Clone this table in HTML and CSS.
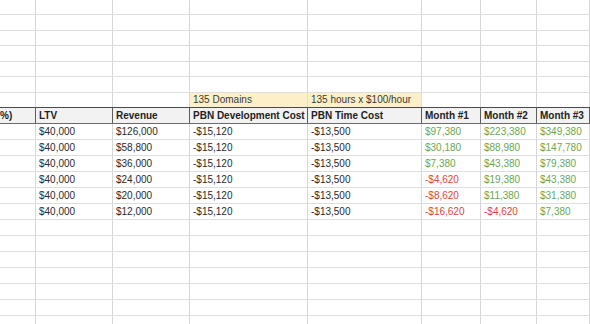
FILE: index.html
```html
<!DOCTYPE html>
<html>
<head>
<meta charset="utf-8">
<link rel="stylesheet" href="styles.css">
</head>
<body>
<div class="sheet">
  <div class="row r-top"><div class="c"></div><div class="c"></div><div class="c"></div><div class="c"></div><div class="c"></div><div class="c"></div><div class="c"></div><div class="c"></div></div>
  <div class="row r-mid"><div class="c"></div><div class="c"></div><div class="c"></div><div class="c"></div><div class="c"></div><div class="c"></div><div class="c"></div><div class="c"></div></div>
  <div class="row r-mid"><div class="c"></div><div class="c"></div><div class="c"></div><div class="c"></div><div class="c"></div><div class="c"></div><div class="c"></div><div class="c"></div></div>
  <div class="row r-mid"><div class="c"></div><div class="c"></div><div class="c"></div><div class="c"></div><div class="c"></div><div class="c"></div><div class="c"></div><div class="c"></div></div>
  <div class="row r-mid"><div class="c"></div><div class="c"></div><div class="c"></div><div class="c"></div><div class="c"></div><div class="c"></div><div class="c"></div><div class="c"></div></div>
  <div class="row r-mid"><div class="c"></div><div class="c"></div><div class="c"></div><div class="c"></div><div class="c"></div><div class="c"></div><div class="c"></div><div class="c"></div></div>
  <div class="row r-note"><div class="c"></div><div class="c"></div><div class="c"></div><div class="c note">135 Domains</div><div class="c note">135 hours x $100/hour</div><div class="c"></div><div class="c"></div><div class="c"></div></div>
  <div class="row r-head"><div class="c">%)</div><div class="c">LTV</div><div class="c">Revenue</div><div class="c">PBN Development Cost</div><div class="c">PBN Time Cost</div><div class="c">Month #1</div><div class="c">Month #2</div><div class="c">Month #3</div></div>
  <div class="row r-data"><div class="c"></div><div class="c">$40,000</div><div class="c">$126,000</div><div class="c">-$15,120</div><div class="c">-$13,500</div><div class="c pos">$97,380</div><div class="c pos">$223,380</div><div class="c pos">$349,380</div></div>
  <div class="row r-data"><div class="c"></div><div class="c">$40,000</div><div class="c">$58,800</div><div class="c">-$15,120</div><div class="c">-$13,500</div><div class="c pos">$30,180</div><div class="c pos">$88,980</div><div class="c pos">$147,780</div></div>
  <div class="row r-data"><div class="c"></div><div class="c">$40,000</div><div class="c">$36,000</div><div class="c">-$15,120</div><div class="c">-$13,500</div><div class="c pos">$7,380</div><div class="c pos">$43,380</div><div class="c pos">$79,380</div></div>
  <div class="row r-data"><div class="c"></div><div class="c">$40,000</div><div class="c">$24,000</div><div class="c">-$15,120</div><div class="c">-$13,500</div><div class="c neg">-$4,620</div><div class="c pos">$19,380</div><div class="c pos">$43,380</div></div>
  <div class="row r-data"><div class="c"></div><div class="c">$40,000</div><div class="c">$20,000</div><div class="c">-$15,120</div><div class="c">-$13,500</div><div class="c neg">-$8,620</div><div class="c pos">$11,380</div><div class="c pos">$31,380</div></div>
  <div class="row r-data"><div class="c"></div><div class="c">$40,000</div><div class="c">$12,000</div><div class="c">-$15,120</div><div class="c">-$13,500</div><div class="c neg">-$16,620</div><div class="c neg">-$4,620</div><div class="c pos">$7,380</div></div>
  <div class="row r-data"><div class="c"></div><div class="c"></div><div class="c"></div><div class="c"></div><div class="c"></div><div class="c"></div><div class="c"></div><div class="c"></div></div>
  <div class="row r-data"><div class="c"></div><div class="c"></div><div class="c"></div><div class="c"></div><div class="c"></div><div class="c"></div><div class="c"></div><div class="c"></div></div>
  <div class="row r-data"><div class="c"></div><div class="c"></div><div class="c"></div><div class="c"></div><div class="c"></div><div class="c"></div><div class="c"></div><div class="c"></div></div>
  <div class="row r-data"><div class="c"></div><div class="c"></div><div class="c"></div><div class="c"></div><div class="c"></div><div class="c"></div><div class="c"></div><div class="c"></div></div>
  <div class="row r-data"><div class="c"></div><div class="c"></div><div class="c"></div><div class="c"></div><div class="c"></div><div class="c"></div><div class="c"></div><div class="c"></div></div>
  <div class="row r-data"><div class="c"></div><div class="c"></div><div class="c"></div><div class="c"></div><div class="c"></div><div class="c"></div><div class="c"></div><div class="c"></div></div>
  <div class="row r-data"><div class="c"></div><div class="c"></div><div class="c"></div><div class="c"></div><div class="c"></div><div class="c"></div><div class="c"></div><div class="c"></div></div>
</div>
</body>
</html>
```

FILE: styles.css
```css
html, body {
  margin: 0;
  padding: 0;
  background: #ffffff;
  overflow: hidden;
}

.sheet {
  width: 590px;
  height: 324px;
  overflow: hidden;
  font-family: "Liberation Sans", Arial, sans-serif;
  font-size: 10px;
  color: #2a2a2a;
}

.row {
  display: grid;
  grid-template-columns: 36px 77px 77px 118px 114px 59px 56px 53px;
  box-sizing: border-box;
  border-bottom: 1px solid #dedede;
}

.c {
  box-sizing: border-box;
  border-right: 1px solid #d6d6d6;
  padding-left: 3px;
  white-space: nowrap;
  overflow: hidden;
  display: flex;
  align-items: center;
}

.r-top { height: 15px; }
.r-mid { height: 15.5px; }
.r-note { height: 14.5px; border-bottom: none; }
.r-data { height: 16px; }

.note {
  background: #fdf0c9;
  color: #3a3a3a;
  border-right-color: #e9dfc0;
}

.r-head {
  height: 17px;
  background: #f2f2f2;
  border-top: 1px solid #4a4a4a;
  border-bottom: 1px solid #6a6a6a;
  font-weight: bold;
  color: #222;
}

.r-head .c {
  border-right-color: #5c5c5c;
}

.r-head .c:first-child {
  padding-left: 0;
}

.pos { color: #6aa84f; }
.neg { color: #e2443c; }
```
